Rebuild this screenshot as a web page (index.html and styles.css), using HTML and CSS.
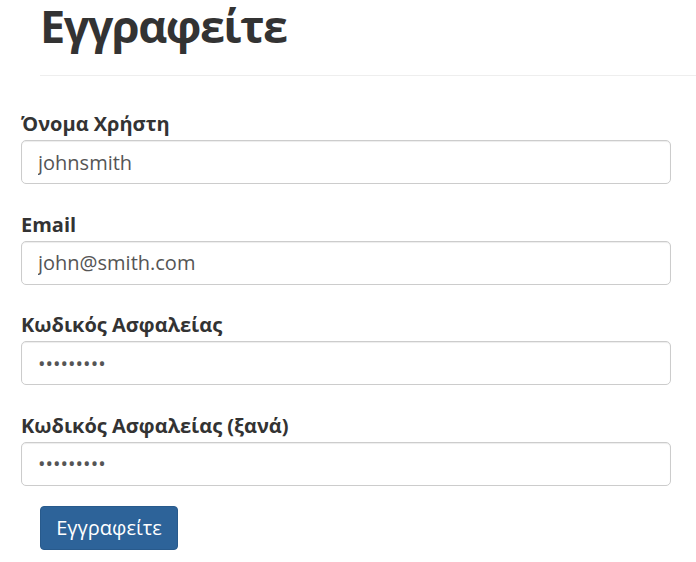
FILE: index.html
```html
<!DOCTYPE html>
<html lang="el">
<head>
<meta charset="utf-8">
<title>Εγγραφείτε</title>
<link rel="stylesheet" href="styles.css">
</head>
<body>
<div class="page-header">
  <h1 class="title">Εγγραφείτε</h1>
</div>
<form class="form">
  <div class="group">
    <label class="label" for="u">Όνομα Χρήστη</label>
    <input class="input" id="u" type="text" value="johnsmith">
  </div>
  <div class="group">
    <label class="label" for="e">Email</label>
    <input class="input" id="e" type="text" value="john@smith.com">
  </div>
  <div class="group">
    <label class="label" for="p">Κωδικός Ασφαλείας</label>
    <input class="input" id="p" type="password" value="123456789">
  </div>
  <div class="group last">
    <label class="label" for="p2">Κωδικός Ασφαλείας (ξανά)</label>
    <input class="input" id="p2" type="password" value="123456789">
  </div>
  <button class="btn" type="button">Εγγραφείτε</button>
</form>
</body>
</html>
```
FILE: styles.css
```css
html, body {
  margin: 0;
  padding: 0;
  background: #fff;
}
body {
  font-family: "Open Sans", "Noto Sans", sans-serif;
  color: #333;
}
.page-header {
  margin-left: 40px;
  border-bottom: 1px solid #eee;
  padding-bottom: 23px;
  margin-bottom: 36px;
}
.title {
  margin: 0;
  font-size: 45px;
  font-weight: 700;
  line-height: 52px;
  letter-spacing: -1.5px;
  color: #333;
}
.form {
  margin-left: 21px;
  width: 650px;
}
.group {
  margin-bottom: 28.5px;
}
.group.last {
  margin-bottom: 20px;
}
.label {
  display: block;
  font-size: 20px;
  font-weight: 700;
  line-height: 24px;
  margin-bottom: 4px;
  color: #333;
}
.input {
  display: block;
  box-sizing: border-box;
  width: 100%;
  height: 44px;
  padding: 0 16px;
  border: 1px solid #ccc;
  border-radius: 5px;
  font-family: "Open Sans", "Noto Sans", sans-serif;
  font-size: 20px;
  color: #555;
  background: #fff;
  box-shadow: inset 0 1px 1px rgba(0,0,0,0.075);
  outline: none;
}
.btn {
  display: block;
  margin-left: 19px;
  box-sizing: border-box;
  width: 138px;
  height: 44px;
  padding: 0;
  font-family: "Open Sans", "Noto Sans", sans-serif;
  font-size: 20px;
  color: #fff;
  background: #2d6399;
  border: 1px solid #285a8c;
  border-radius: 4px;
}
```
